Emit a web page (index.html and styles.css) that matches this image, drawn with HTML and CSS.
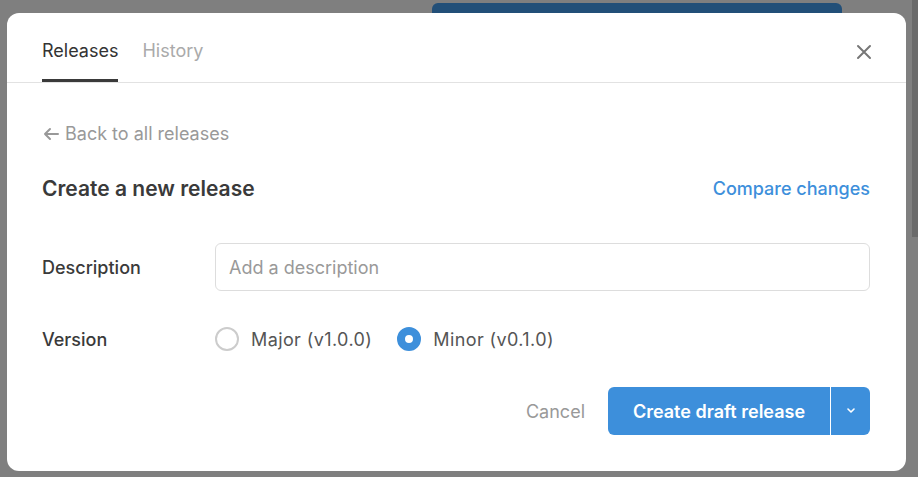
FILE: index.html
```html
<!DOCTYPE html>
<html lang="en">
<head>
  <meta charset="UTF-8" />
  <meta name="viewport" content="width=device-width, initial-scale=1.0"/>
  <title>Create a new release</title>
  <link rel="stylesheet" href="styles.css">
</head>
<body>

  <!-- page behind the overlay -->
  <div class="backdrop">
    <div class="bg-button"></div>
    <div class="bg-scroll"></div>
  </div>

  <div class="modal">
    <div class="modal-header">
      <div class="tabs">
        <a class="tab active" href="#">Releases</a>
        <a class="tab" href="#">History</a>
      </div>
      <button class="close-btn" aria-label="Close">
        <svg width="16" height="16" viewBox="0 0 16 16"><path d="M2 2 L14 14 M14 2 L2 14" stroke="#777" stroke-width="2" stroke-linecap="round"/></svg>
      </button>
    </div>

    <div class="modal-body">
      <a class="back-link" href="#">
        <svg width="18" height="14" viewBox="0 0 18 14"><path d="M16 7 H3 M8 2 L3 7 L8 12" fill="none" stroke="#999" stroke-width="2" stroke-linecap="round" stroke-linejoin="round"/></svg>
        Back to all releases
      </a>

      <div class="title-row">
        <h2>Create a new release</h2>
        <a class="compare" href="#">Compare changes</a>
      </div>

      <div class="form-row">
        <label class="form-label">Description</label>
        <input class="text-input" type="text" placeholder="Add a description" />
      </div>

      <div class="form-row">
        <label class="form-label">Version</label>
        <div class="radios">
          <label class="radio"><span class="dot"></span>Major (v1.0.0)</label>
          <label class="radio checked"><span class="dot"></span>Minor (v0.1.0)</label>
        </div>
      </div>

      <div class="footer">
        <a class="cancel" href="#">Cancel</a>
        <div class="split-btn">
          <button class="main-btn">Create draft release</button>
          <button class="drop-btn" aria-label="More">
            <svg width="10" height="6" viewBox="0 0 10 6"><path d="M2 1 L5 4 L8 1" fill="none" stroke="#fff" stroke-width="1.6" stroke-linecap="round" stroke-linejoin="round"/></svg>
          </button>
        </div>
      </div>
    </div>
  </div>

</body>
</html>
```

FILE: styles.css
```css
* {
  box-sizing: border-box;
  margin: 0;
  padding: 0;
}

body {
  font-family: Inter, "Noto Sans", sans-serif;
  background-color: #7f7f7f;
  height: 100vh;
  overflow: hidden;
  padding: 13px 12px 6px 7px;
  color: #333;
}

/* BACKDROP */
.backdrop {
  position: fixed;
  inset: 0;
  z-index: 0;
}

.bg-button {
  position: absolute;
  left: 432px;
  top: 3px;
  width: 410px;
  height: 30px;
  background-color: #224f78;
  border-radius: 6px;
}

.bg-scroll {
  position: absolute;
  right: 0;
  top: 0;
  width: 6px;
  height: 237px;
  background-color: #6a6a6a;
}

/* MODAL */
.modal {
  position: relative;
  z-index: 1;
  width: 899px;
  height: 458px;
  background-color: #fff;
  border-radius: 12px;
}

.modal-header {
  display: flex;
  justify-content: space-between;
  align-items: flex-end;
  border-bottom: 1px solid #e2e2e2;
  padding: 0 34px 0 35px;
  height: 70px;
}

.tabs {
  display: flex;
  gap: 24px;
}

.tab {
  font-size: 18px;
  line-height: 24px;
  color: #aaa;
  text-decoration: none;
  padding-bottom: 16px;
  border-bottom: 3px solid transparent;
}

.tab.active {
  color: #333;
  border-bottom-color: #3a3a3a;
}

.close-btn {
  background: none;
  border: none;
  cursor: pointer;
  align-self: flex-start;
  margin-top: 31px;
  width: 16px;
  height: 16px;
}

.modal-body {
  padding: 39px 36px 36px 35px;
}

.back-link {
  display: flex;
  align-items: center;
  gap: 5px;
  font-size: 18px;
  line-height: 24px;
  color: #999;
  text-decoration: none;
}

.title-row {
  display: flex;
  justify-content: space-between;
  align-items: center;
  margin-top: 28px;
  height: 28px;
}

.title-row h2 {
  font-size: 21px;
  font-weight: 600;
  color: #3a3a3a;
}

.compare {
  font-size: 18px;
  font-weight: 500;
  color: #3d8fdb;
  text-decoration: none;
}

.form-row {
  display: flex;
  align-items: center;
  height: 48px;
  margin-top: 24px;
}

.title-row + .form-row {
  margin-top: 41px;
}

.form-label {
  width: 173px;
  flex-shrink: 0;
  font-size: 18px;
  font-weight: 500;
  color: #3a3a3a;
}

.text-input {
  flex: 1;
  height: 48px;
  border: 1px solid #ddd;
  border-radius: 6px;
  padding: 0 13px;
  font-family: inherit;
  font-size: 18px;
  color: #333;
}

.text-input::placeholder {
  color: #999;
}

.radios {
  display: flex;
  gap: 25px;
}

.radio {
  display: flex;
  align-items: center;
  gap: 12px;
  font-size: 18px;
  letter-spacing: 0.4px;
  color: #555;
}

.dot {
  width: 24px;
  height: 24px;
  border-radius: 50%;
  border: 2px solid #ccc;
  background-color: #fff;
}

.radio.checked .dot {
  border: 8px solid #3d8fdb;
  background-color: #fff;
}

.footer {
  display: flex;
  justify-content: flex-end;
  align-items: center;
  gap: 23px;
  margin-top: 24px;
}

.cancel {
  font-size: 18px;
  color: #999;
  text-decoration: none;
}

.split-btn {
  display: flex;
  height: 48px;
}

.split-btn button {
  background-color: #3d8fdb;
  color: white;
  border: none;
  cursor: pointer;
  font-family: inherit;
}

.main-btn {
  width: 222px;
  font-size: 18px;
  font-weight: 600;
  border-radius: 6px 0 0 6px;
}

.drop-btn {
  width: 40px;
  border-left: 1px solid #fff !important;
  border-radius: 0 6px 6px 0;
  display: flex;
  align-items: center;
  justify-content: center;
}
```
